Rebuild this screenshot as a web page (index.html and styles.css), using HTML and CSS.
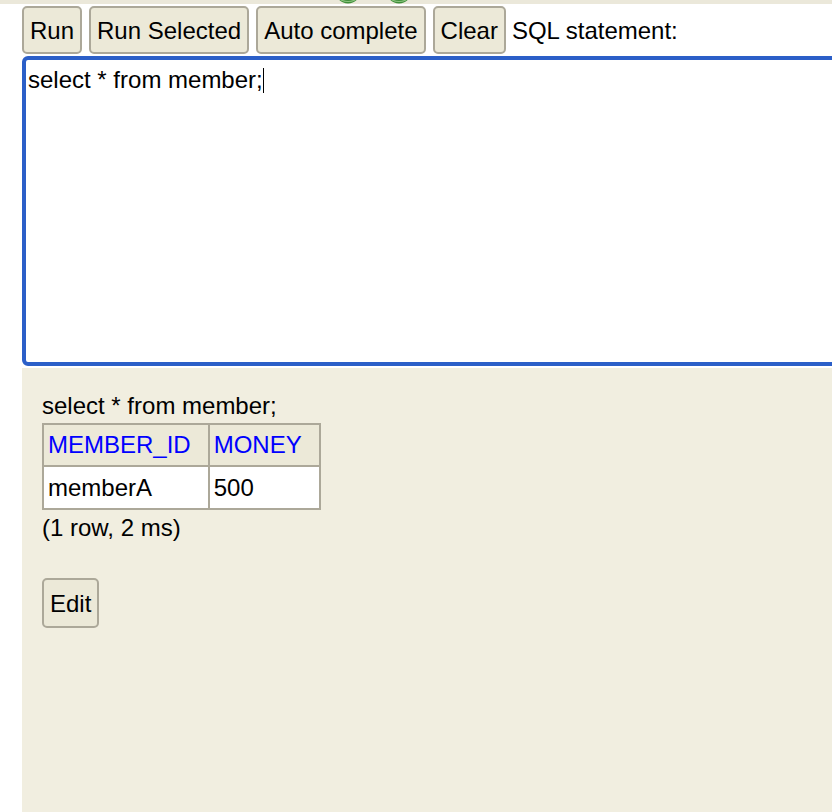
FILE: index.html
```html
<!DOCTYPE html>
<html>
<head>
<meta charset="utf-8">
<link rel="stylesheet" href="styles.css">
</head>
<body>
<div class="topstrip">
  <svg class="ico" viewBox="0 0 26 4" width="26" height="4"><circle cx="13" cy="-9" r="12.5" fill="#3f8f3a"/><path d="M6 0 Q13 3 20 0" stroke="#8cc47f" stroke-width="1.2" fill="none"/></svg>
  <svg class="ico" viewBox="0 0 26 4" width="26" height="4"><circle cx="13" cy="-9" r="12.5" fill="#3f8f3a"/><path d="M6 0 Q13 3 20 0" stroke="#8cc47f" stroke-width="1.2" fill="none"/></svg>
</div>
<div class="toolbar">
  <button class="btn">Run</button>
  <button class="btn">Run Selected</button>
  <button class="btn">Auto complete</button>
  <button class="btn">Clear</button>
  <span class="label">SQL statement:</span>
</div>
<div class="editor">select * from member;<span class="caret"></span></div>
<div class="result">
  <div class="line">select * from member;</div>
  <table class="grid">
    <tr><th>MEMBER_ID</th><th>MONEY</th></tr>
    <tr><td>memberA</td><td>500</td></tr>
  </table>
  <div class="line info">(1 row, 2 ms)</div>
  <button class="btn edit">Edit</button>
</div>
</body>
</html>
```
FILE: styles.css
```css
html, body {
  margin: 0;
  padding: 0;
  background: #ffffff;
}
body {
  width: 832px;
  height: 812px;
  overflow: hidden;
  display: flex;
  flex-direction: column;
  font-family: "Liberation Sans", Arial, sans-serif;
  font-size: 24px;
  color: #000;
}
.topstrip {
  height: 4px;
  background: #ebe8da;
  display: flex;
  gap: 25px;
  padding-left: 335px;
  overflow: hidden;
  flex: none;
}
.ico {
  display: block;
}
.toolbar {
  display: flex;
  align-items: center;
  gap: 7px;
  margin-top: 2px;
  padding-left: 22px;
  height: 48px;
  flex: none;
}
.btn {
  font-family: "Liberation Sans", Arial, sans-serif;
  font-size: 24px;
  line-height: 28px;
  color: #000;
  background: #ece9d8;
  border: 2px solid #aca899;
  border-radius: 5px;
  padding: 9px 6px 7px;
  margin: 0;
  height: 48px;
}
.label {
  margin-left: -1px;
  line-height: 28px;
  padding-top: 2px;
}
.editor {
  flex: none;
  margin-left: 22px;
  margin-top: 2px;
  width: 830px;
  height: 294px;
  border: 4px solid #2b5fc8;
  border-radius: 6px;
  padding: 6px 2px 2px;
  line-height: 28px;
  background: #fff;
  white-space: pre;
}
.caret {
  display: inline-block;
  width: 1.5px;
  height: 25px;
  background: #000;
  vertical-align: -5px;
}
.result {
  flex: 1;
  margin-left: 22px;
  margin-top: 2px;
  background: #f1eee0;
  padding: 24px 20px 0;
}
.line {
  line-height: 28px;
}
.info {
  margin-top: 4px;
}
.grid {
  border-collapse: collapse;
  border: 2px solid #aca899;
  margin-top: 3px;
}
.grid th, .grid td {
  border: 2px solid #aca899;
  font-weight: normal;
  text-align: left;
  line-height: 28px;
  padding: 6px 17px 6px 4px;
}
.grid th {
  background: #ece9d8;
  color: #0000ff;
}
.grid td {
  background: #ffffff;
  padding-top: 7px;
}
.edit {
  margin-top: 36px;
  height: 50px;
  padding: 10px 6px 8px;
}
```
